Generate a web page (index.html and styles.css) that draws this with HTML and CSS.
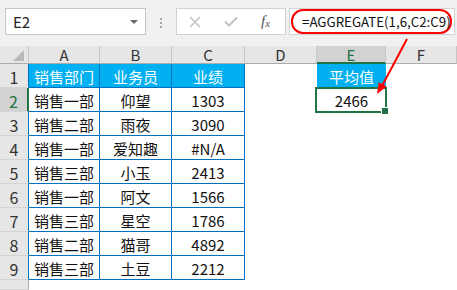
FILE: index.html
```html
<!DOCTYPE html>
<html lang="zh">
<head>
	<meta charset="UTF-8" />
	<meta name="viewport" content="width=device-width, initial-scale=1.0" />
	<title>AGGREGATE</title>
	<link rel="stylesheet" href="styles.css">
</head>
<body>
	<!-- 编辑栏 -->
	<div class="bar">
		<div class="name-box"><span>E2</span><i class="caret"></i></div>
		<div class="grip"><i></i><i></i><i></i></div>
		<div class="fx-box">
			<svg class="ico-x" width="12" height="12" viewBox="0 0 12 12"><path d="M1 1L11 11M11 1L1 11" stroke="#c3c3c3" stroke-width="1.6" fill="none"/></svg>
			<svg class="ico-ok" width="14" height="11" viewBox="0 0 14 11"><path d="M1 5.5L5 9.5L13 1.5" stroke="#c3c3c3" stroke-width="2" fill="none"/></svg>
			<span class="fx">f<sub>x</sub></span>
		</div>
		<div class="formula"><span class="mark">=AGGREGATE(1,6,C2:C9)</span></div>
	</div>

	<!-- 工作表 -->
	<div class="sheet">
		<div class="row head">
			<div class="corner"><i></i></div>
			<div class="col">A</div>
			<div class="col">B</div>
			<div class="col">C</div>
			<div class="col">D</div>
			<div class="col sel">E</div>
			<div class="col">F</div>
		</div>
		<div class="row">
			<div class="rh in">1</div>
			<div class="c t th">销售部门</div>
			<div class="c t th">业务员</div>
			<div class="c t th">业绩</div>
			<div class="c"></div>
			<div class="c th th-e">平均值</div>
			<div class="c"></div>
		</div>
		<div class="row">
			<div class="rh in cur">2</div>
			<div class="c t">销售一部</div>
			<div class="c t">仰望</div>
			<div class="c t">1303</div>
			<div class="c"></div>
			<div class="c active">2466</div>
			<div class="c"></div>
		</div>
		<div class="row">
			<div class="rh in">3</div>
			<div class="c t">销售二部</div>
			<div class="c t">雨夜</div>
			<div class="c t">3090</div>
			<div class="c"></div><div class="c"></div><div class="c"></div>
		</div>
		<div class="row">
			<div class="rh in">4</div>
			<div class="c t">销售一部</div>
			<div class="c t">爱知趣</div>
			<div class="c t">#N/A</div>
			<div class="c"></div><div class="c"></div><div class="c"></div>
		</div>
		<div class="row">
			<div class="rh in">5</div>
			<div class="c t">销售三部</div>
			<div class="c t">小玉</div>
			<div class="c t">2413</div>
			<div class="c"></div><div class="c"></div><div class="c"></div>
		</div>
		<div class="row">
			<div class="rh in">6</div>
			<div class="c t">销售一部</div>
			<div class="c t">阿文</div>
			<div class="c t">1566</div>
			<div class="c"></div><div class="c"></div><div class="c"></div>
		</div>
		<div class="row">
			<div class="rh in">7</div>
			<div class="c t">销售三部</div>
			<div class="c t">星空</div>
			<div class="c t">1786</div>
			<div class="c"></div><div class="c"></div><div class="c"></div>
		</div>
		<div class="row">
			<div class="rh in">8</div>
			<div class="c t">销售二部</div>
			<div class="c t">猫哥</div>
			<div class="c t">4892</div>
			<div class="c"></div><div class="c"></div><div class="c"></div>
		</div>
		<div class="row">
			<div class="rh in">9</div>
			<div class="c t">销售三部</div>
			<div class="c t">土豆</div>
			<div class="c t">2212</div>
			<div class="c"></div><div class="c"></div><div class="c"></div>
		</div>
		<div class="row tail">
			<div class="rh"></div>
			<div class="c"></div><div class="c"></div><div class="c"></div>
			<div class="c"></div><div class="c"></div><div class="c"></div>
		</div>
	</div>

	<!-- 标注箭头 -->
	<svg class="arrow" width="457" height="290" viewBox="0 0 457 290">
		<line x1="407" y1="39" x2="382" y2="86" stroke="#f00" stroke-width="2"/>
		<polygon points="377,94 386.6,86.5 378.7,82.3" fill="#f00"/>
	</svg>
</body>
</html>
```

FILE: styles.css
```css
*{padding: 0;margin: 0;box-sizing: border-box;}
body{
	position: relative;
	width: 457px;
	height: 290px;
	overflow: hidden;
	background: #fff;
	font-family: "Noto Sans CJK SC", "Liberation Sans", sans-serif;
	font-size: 15px;
	color: #111;
}

/* 编辑栏 */
.bar{display: flex;align-items: flex-start;height: 46px;padding: 8px 0 0 5px;background: #f1f1f1;}
.name-box{
	display: flex;
	align-items: center;
	justify-content: space-between;
	width: 141px;
	height: 27px;
	padding: 0 7px 0 7px;
	background: #fff;
	border: 1px solid #c6c6c6;
	line-height: 1;
	color: #222;
}
.caret{width: 0;height: 0;border-left: 4px solid transparent;border-right: 4px solid transparent;border-top: 4px solid #6a6a6a;}
.grip{display: flex;flex-direction: column;align-items: center;gap: 2px;width: 30px;padding-top: 10px;}
.grip i{display: block;width: 2px;height: 2px;background: #a6a6a6;}
.fx-box{
	display: flex;
	align-items: center;
	width: 110px;
	height: 27px;
	background: #fff;
	border: 1px solid #d2d2d2;
}
.ico-x{margin-left: 12px;}
.ico-ok{margin-left: 23px;}
.fx{margin-left: 23px;font-family: "Liberation Serif", serif;font-style: italic;font-size: 15px;color: #555;line-height: 1;}
.fx sub{font-size: 11px;vertical-align: -1px;}
.formula{
	display: flex;
	align-items: flex-end;
	width: 166px;
	height: 27px;
	margin-left: 3px;
	padding-left: 1px;
	background: #fff;
	border: 1px solid #d2d2d2;
}
.mark{
	display: flex;
	align-items: center;
	width: 161px;
	height: 25px;
	padding-left: 9px;
	border: 2px solid #f00;
	border-radius: 12px;
	font-size: 13.3px;
	line-height: 1;
	color: #111;
	white-space: nowrap;
}

/* 工作表 */
.row{display: grid;grid-template-columns: 29px 71px 72px 73px 72px 69px 71px;height: 24px;}
.row.head{height: 18px;background: #e6e6e6;}
.row.tail{height: 10px;}
.corner{position: relative;border-right: 1px solid #c6c6c6;border-bottom: 1px solid #ababab;}
.corner i{position: absolute;right: 4px;bottom: 2px;width: 0;height: 0;border-left: 11px solid transparent;border-bottom: 11px solid #b9b9b9;}
.col{display: flex;align-items: center;justify-content: center;border-right: 1px solid #c6c6c6;border-bottom: 1px solid #ababab;color: #333;line-height: 1;}
.col.sel{background: #d2d2d2;border-bottom: 2px solid #217346;color: #217346;}
.rh{
	display: flex;
	align-items: center;
	justify-content: center;
	padding-top: 3px;
	background: #e6e6e6;
	border-right: 1px solid #ababab;
	border-bottom: 1px solid #d4d4d4;
	font-size: 16px;
	color: #333;
	line-height: 1;
}
.rh.in{border-right-color: #0070c0;}
.rh.cur{background: #d2d2d2;border-right: 2px solid #217346;color: #217346;}
.c{display: flex;align-items: center;justify-content: center;padding-top: 1px;line-height: 1;}
.c.t{border-right: 1px solid #0070c0;border-bottom: 1px solid #0070c0;}
.c.th{background: #00b0f0;color: #fff;}
.c.th-e{border-bottom: 1px solid #0070c0;}

/* 当前单元格 */
.c.active{position: relative;}
.c.active::after{content: "";position: absolute;left: -2px;top: -1px;right: -1px;bottom: -1px;border: 2px solid #217346;}
.c.active::before{content: "";position: absolute;right: -3px;bottom: -3px;z-index: 1;width: 6px;height: 6px;background: #217346;border: 1px solid #fff;}

.arrow{position: absolute;left: 0;top: 0;pointer-events: none;}
```
